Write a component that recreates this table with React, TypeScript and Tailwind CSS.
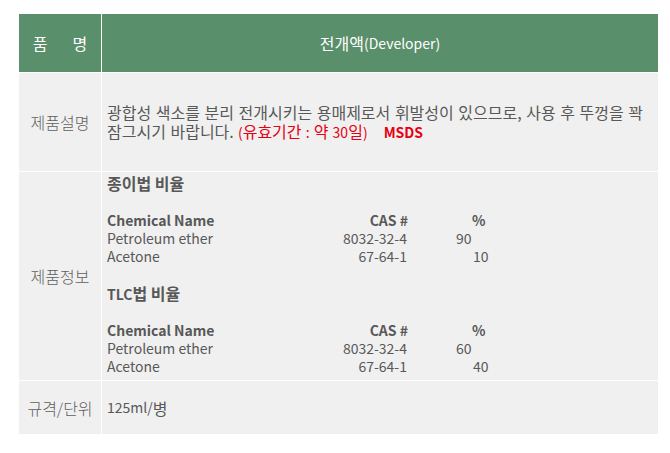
const font = { fontFamily: '"Malgun Gothic", "Noto Sans CJK KR", sans-serif' };

// Korean runs are set a little larger so their width matches the page
function K({ children, className = '' }: { children: React.ReactNode; className?: string }) {
  return <span className={`text-[16px] ${className}`}>{children}</span>;
}

const papers = [
  {
    title: <K>종이법 비율</K>,
    rows: [
      { name: 'Petroleum ether', cas: '8032-32-4', pct: '90', pctPad: 'pl-[49px]' },
      { name: 'Acetone', cas: '67-64-1', pct: '10', pctPad: 'pl-[66px]' },
    ],
  },
  {
    title: (
      <>
        TLC<K>법 비율</K>
      </>
    ),
    rows: [
      { name: 'Petroleum ether', cas: '8032-32-4', pct: '60', pctPad: 'pl-[49px]' },
      { name: 'Acetone', cas: '67-64-1', pct: '40', pctPad: 'pl-[66px]' },
    ],
  },
];

function Label({ children, h }: { children: React.ReactNode; h: string }) {
  return (
    <div className={`${h} bg-[#f0f0f0] flex items-center justify-center text-[16px] font-light text-[#5f5f5f]`}>
      {children}
    </div>
  );
}

export default function App() {
  return (
    <div className="min-h-screen bg-white pt-[14px] pl-[19px]" style={font}>
      <div className="w-[639px] grid grid-cols-[82px_556px] gap-px bg-white">
        {/* header */}
        <div className="h-[58px] bg-[#5a8f6b] text-white text-[16px] flex items-center justify-center gap-[25px]">
          <span>품</span>
          <span>명</span>
        </div>
        <div className="h-[58px] bg-[#5a8f6b] text-white text-[14px] flex items-center justify-center">
          <K>전개액</K>(Developer)
        </div>

        {/* 제품설명 */}
        <Label h="h-[98px]">제품설명</Label>
        <div className="h-[98px] bg-[#f0f0f0] flex items-center pl-[5px] pr-[4px] text-[14px] leading-[18px] text-[#585858]">
          <p className="[word-spacing:1px] whitespace-nowrap">
            <K>광합성 색소를 분리 전개시키는 용매제로서 휘발성이 있으므로, 사용 후 뚜껑을 꽉</K>
            <br />
            <K>잠그시기 바랍니다.</K>{' '}
            <span className="text-[#e60012]">
              (<K>유효기간</K> : <K>약</K> 30<K>일</K>)
            </span>
            <span className="ml-[16px] font-bold text-[#e60012]">MSDS</span>
          </p>
        </div>

        {/* 제품정보 */}
        <Label h="h-[208px]">제품정보</Label>
        <div className="h-[208px] bg-[#f0f0f0] pl-[5px] pt-[2px] text-[14px] leading-[18.1px] text-[#585858]">
          {papers.map((p, i) => (
            <div key={i}>
              <div className="font-bold">{p.title}</div>
              <div className="h-[18.1px]" />
              <div className="flex font-bold">
                <span className="w-[200px]">Chemical Name</span>
                <span className="w-[101px] text-right">CAS #</span>
                <span className="pl-[64px]">%</span>
              </div>
              {p.rows.map((r) => (
                <div key={r.name} className="flex">
                  <span className="w-[200px]">{r.name}</span>
                  <span className="w-[100px] text-right">{r.cas}</span>
                  <span className={r.pctPad}>{r.pct}</span>
                </div>
              ))}
              {i === 0 && <div className="h-[18.1px]" />}
            </div>
          ))}
        </div>

        {/* 규격/단위 */}
        <Label h="h-[53px]">규격/단위</Label>
        <div className="h-[53px] bg-[#f0f0f0] flex items-center pl-[5px] text-[14px] text-[#585858]">
          125ml/<K>병</K>
        </div>
      </div>
    </div>
  );
}
